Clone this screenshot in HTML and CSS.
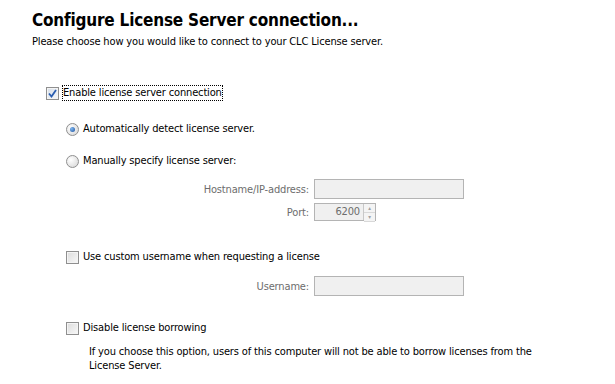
FILE: index.html
```html
<!DOCTYPE html>
<html lang="en">
<head>
    <meta charset="UTF-8">
    <title>Configure License Server connection</title>
    <link rel="stylesheet" href="styles.css">
</head>
<body>
    <div class="page">
        <h1>Configure License Server connection...</h1>
        <p class="intro">Please choose how you would like to connect to your CLC License server.</p>

        <div class="options">
            <!-- Main switch -->
            <label class="check-row top">
                <span class="box checked"><svg width="9" height="9" viewBox="0 0 9 9"><path d="M1 4.5 L3.5 7.5 L8 1" fill="none" stroke="#2a5db0" stroke-width="1.8"/></svg></span>
                <span class="focus-text">Enable license server connection</span>
            </label>

            <div class="sub">
                <label class="check-row radio-first">
                    <span class="radio on"><span class="dot"></span></span>
                    <span>Automatically detect license server.</span>
                </label>
                <label class="check-row radio-second">
                    <span class="radio"></span>
                    <span>Manually specify license server:</span>
                </label>

                <div class="field-row first-field">
                    <span class="field-label">Hostname/IP-address:</span>
                    <span class="text-input wide"></span>
                </div>
                <div class="field-row">
                    <span class="field-label">Port:</span>
                    <span class="spinner">
                        <span class="spin-value">6200</span>
                        <span class="spin-buttons">
                            <span class="spin-btn">&#9652;</span>
                            <span class="spin-btn">&#9662;</span>
                        </span>
                    </span>
                </div>

                <label class="check-row user-check">
                    <span class="box"></span>
                    <span>Use custom username when requesting a license</span>
                </label>
                <div class="field-row user-field">
                    <span class="field-label">Username:</span>
                    <span class="text-input wide"></span>
                </div>

                <label class="check-row borrow-check">
                    <span class="box"></span>
                    <span>Disable license borrowing</span>
                </label>
                <p class="note">If you choose this option, users of this computer will not be able to borrow licenses from the License Server.</p>
            </div>
        </div>
    </div>
</body>
</html>
```

FILE: styles.css
```css
body {
    margin: 0;
    background: white;
    font-family: 'DejaVu Sans Condensed', 'DejaVu Sans', sans-serif;
    font-stretch: semi-condensed;
    font-size: 11px;
    letter-spacing: -0.15px;
    color: #000;
}

.page {
    padding: 9px 0 0 32px;
}

h1 {
    margin: 0;
    font-size: 17px;
    font-weight: bold;
    line-height: 22px;
    letter-spacing: -0.2px;
}

.intro {
    margin: 4px 0 0 0;
    line-height: 14px;
}

.options {
    padding-left: 14px;
    margin-top: 37px;
}

.check-row {
    display: flex;
    align-items: center;
    gap: 4px;
    line-height: 14px;
}

.focus-text {
    outline: 1px dotted #000;
}

.box {
    width: 11px;
    height: 11px;
    border: 1px solid #8f8f8f;
    background: linear-gradient(135deg, #dcdcdc, #f8f8f8);
    box-shadow: inset 0 0 0 1px #f4f4f4;
    display: flex;
    align-items: center;
    justify-content: center;
}

.box.checked {
    background: linear-gradient(135deg, #d6dee8, #f6f8fb);
}

.radio {
    width: 11px;
    height: 11px;
    border: 1px solid #8f8f8f;
    border-radius: 50%;
    background: radial-gradient(circle at 35% 35%, #ffffff, #d4d4d4);
    display: flex;
    align-items: center;
    justify-content: center;
}

.radio.on .dot {
    width: 5px;
    height: 5px;
    border-radius: 50%;
    background: radial-gradient(circle at 35% 35%, #7fb8f0, #1c4f9c);
}

.sub {
    padding-left: 20px;
}

.radio-first {
    margin-top: 22px;
}

.radio-second {
    margin-top: 18px;
}

.field-row {
    display: flex;
    align-items: center;
    gap: 5px;
    margin-top: 4px;
}

.first-field {
    margin-top: 11px;
}

.field-label {
    width: 243px;
    text-align: right;
    color: #6d6d6d;
}

.text-input {
    height: 18px;
    border: 1px solid #b4b4b4;
    background: #f0f0f0;
}

.text-input.wide {
    width: 148px;
}

.spinner {
    display: flex;
    height: 16px;
    width: 60px;
    border: 1px solid #b4b4b4;
    background: #f0f0f0;
}

.spin-value {
    flex: 1;
    text-align: right;
    padding-right: 3px;
    line-height: 16px;
    color: #6d6d6d;
}

.spin-buttons {
    display: flex;
    flex-direction: column;
    width: 11px;
    border-left: 1px solid #c8c8c8;
}

.spin-btn {
    flex: 1;
    font-size: 6px;
    line-height: 8px;
    text-align: center;
    color: #a0a0a0;
    background: #f4f4f4;
    border-bottom: 1px solid #d8d8d8;
}

.user-check {
    margin-top: 29px;
}

.user-field {
    margin-top: 12px;
}

.borrow-check {
    margin-top: 25px;
}

.note {
    margin: 10px 0 0 23px;
    width: 470px;
    line-height: 14px;
}
```
